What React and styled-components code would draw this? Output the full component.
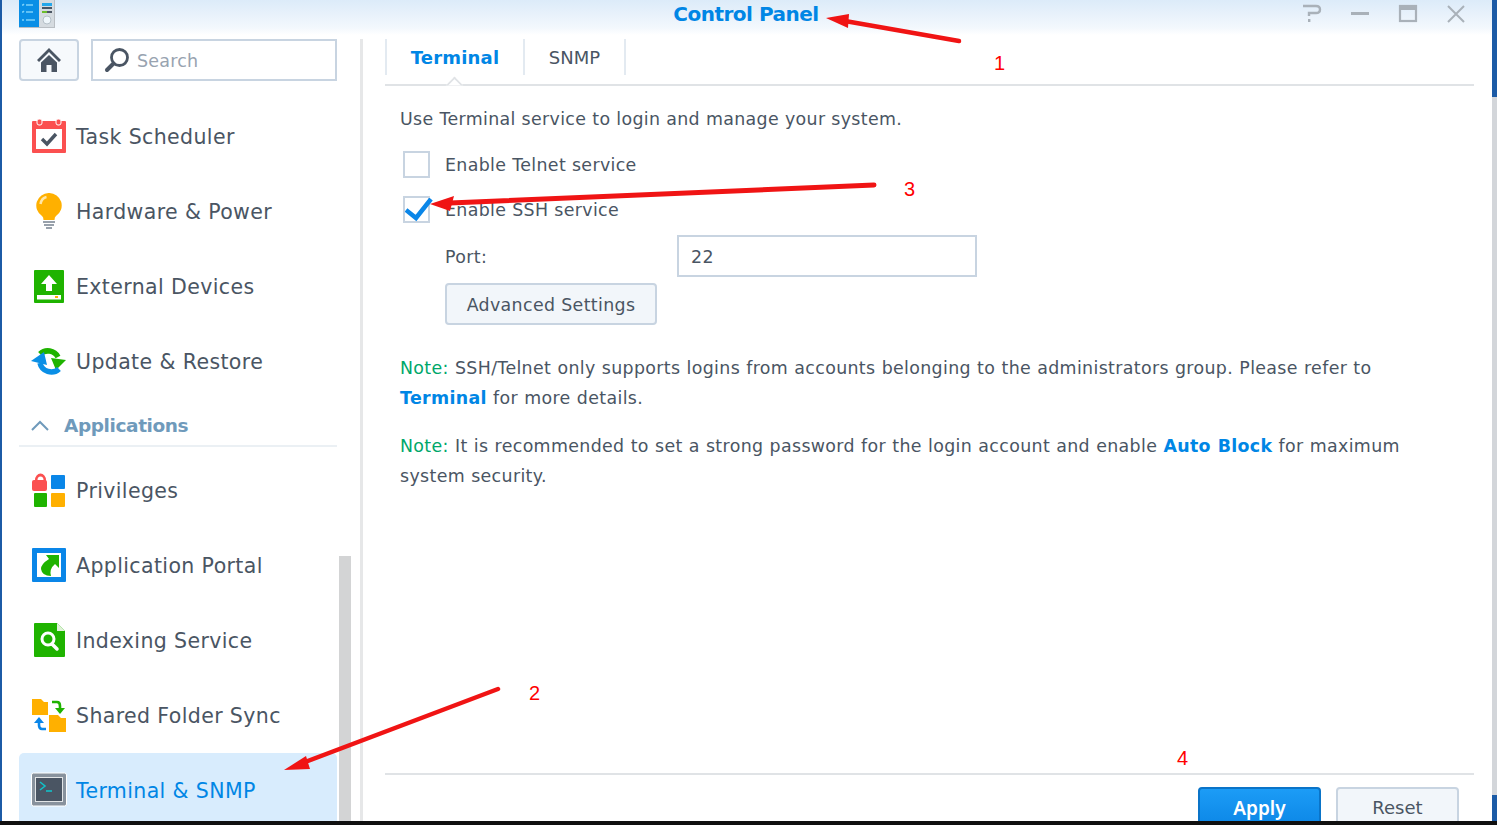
import React from "react";
import styled, { createGlobalStyle } from "styled-components";

const Global = createGlobalStyle`
  html, body { margin: 0; padding: 0; background: #000; }
  body { font-family: "DejaVu Sans", sans-serif; color: #4a5563; }
  * { box-sizing: border-box; }
`;

const Page = styled.div`
  position: relative;
  width: 1497px;
  height: 825px;
  overflow: hidden;
  display: flex;
  flex-direction: column;
`;
const Desktop = styled.div`
  flex: none;
  height: 821px;
  display: flex;
  background: #1c5ba6;
  padding-left: 2px;
`;
const BlackBar = styled.div`
  flex: none;
  height: 4px;
  background: #101010;
`;
const Win = styled.div`
  width: 1490px;
  height: 821px;
  background: #fff;
  display: flex;
  flex-direction: column;
  overflow: hidden;
`;
const RightEdge = styled.div`
  width: 5px;
  display: flex;
  flex-direction: column;
`;
const EdgePart = styled.div`
  height: ${(p) => p.$h}px;
  flex: ${(p) => (p.$h ? "none" : 1)};
  background: ${(p) => p.$c};
`;
const TitleBar = styled.header`
  flex: none;
  height: 39px;
  background: linear-gradient(#dcebf9 0, #f3f8fd 28px, #fff 35px);
  display: grid;
  grid-template-columns: 1fr auto 1fr;
`;
const GlyphSlot = styled.div`
  padding-left: 17px;
`;
const TitleText = styled.h1`
  margin: 3px 2px 0 0;
  font-size: 20px;
  line-height: 22px;
  font-weight: 700;
  letter-spacing: -0.5px;
  color: #0086e5;
`;
const WinControls = styled.div`
  display: flex;
  justify-content: flex-end;
  align-items: flex-start;
  padding: 3px 26px 0 0;
  gap: 28px;
`;
const Body = styled.div`
  flex: 1;
  min-height: 0;
  display: flex;
`;
const Sidebar = styled.aside`
  flex: none;
  width: 361px;
  padding-left: 17px;
  display: flex;
  border-right: 3px solid #e6e7e8;
`;
const SideList = styled.div`
  width: 318px;
  flex: none;
  display: flex;
  flex-direction: column;
`;
const ScrollTrack = styled.div`
  width: 12px;
  margin-left: 2px;
  flex: none;
  display: flex;
  flex-direction: column;
  justify-content: flex-end;
`;
const ScrollThumb = styled.div`
  height: 265px;
  background: #d3d4d5;
`;
const SearchRow = styled.div`
  display: flex;
  gap: 12px;
  height: 42px;
  flex: none;
  margin-bottom: 17.5px;
`;
const HomeButton = styled.button`
  width: 60px;
  height: 42px;
  padding: 0;
  display: flex;
  align-items: center;
  justify-content: center;
  background: #f6f9fc;
  border: 2px solid #c8d4e1;
  border-radius: 4px;
`;
const SearchBox = styled.div`
  flex: 1;
  display: flex;
  align-items: center;
  gap: 7px;
  padding-left: 11px;
  border: 2px solid #c8d4e1;
  font-size: 17.5px;
  letter-spacing: 0.2px;
  line-height: 24px;
  color: #98a3b0;
`;
const SearchLabel = styled.span`
  padding-top: 2px;
`;
const NavItem = styled.div`
  flex: none;
  height: 75px;
  display: flex;
  align-items: center;
  gap: 9px;
  padding-left: 12px;
  font-size: 20.5px;
  letter-spacing: 0.38px;
  color: ${(p) => (p.$active ? "#0086e5" : "#4a5563")};
  background: ${(p) => (p.$active ? "#d8ecfd" : "transparent")};
  border-radius: ${(p) => (p.$active ? "5px 5px 0 0" : "0")};
`;
const NavLabel = styled.span`
  padding-top: 2px;
`;
const IconBox = styled.span`
  width: 36px;
  height: 36px;
  flex: none;
  display: flex;
`;
const SectionHead = styled.div`
  flex: none;
  height: 48px;
  padding: 7px 0 0 11px;
  margin-bottom: 6px;
  display: flex;
  align-items: center;
  gap: 14px;
  font-size: 18.5px;
  font-weight: 700;
  letter-spacing: -0.4px;
  color: #6f9abb;
  border-bottom: 2px solid #ebf0f4;
`;
const Main = styled.main`
  flex: 1;
  min-width: 0;
  padding: 0 18px 0 22px;
  display: flex;
  flex-direction: column;
`;
const Tabs = styled.nav`
  position: relative;
  flex: none;
  height: 47px;
  display: flex;
  border-bottom: 2px solid #e0e3e6;
`;
const Tab = styled.div`
  height: 36px;
  width: ${(p) => p.$w}px;
  display: flex;
  align-items: center;
  justify-content: center;
  border-left: ${(p) => (p.$first ? "2px solid #e3eaf1" : "0")};
  border-right: 2px solid #e3eaf1;
  font-size: 18px;
  font-weight: ${(p) => (p.$active ? 700 : 400)};
  letter-spacing: ${(p) => (p.$active ? "0.2px" : "0")};
  color: ${(p) => (p.$active ? "#0086e5" : "#4a5563")};
`;
const TabNotch = styled.span`
  position: absolute;
  left: 62.5px;
  bottom: -7.5px;
  width: 13px;
  height: 13px;
  background: #fff;
  border-top: 2px solid #e0e3e6;
  border-left: 2px solid #e0e3e6;
  transform: rotate(45deg);
  clip-path: polygon(0 0, 100% 0, 0 100%);
`;
const Content = styled.section`
  flex: 1;
  min-height: 0;
  padding: 19px 0 0 15px;
  font-size: 17.4px;
  letter-spacing: 0.35px;
  display: flex;
  flex-direction: column;
`;
const Intro = styled.p`
  margin: 0 0 18px;
  line-height: 28px;
`;
const CheckRow = styled.label`
  display: flex;
  align-items: center;
  height: 27px;
  margin: 0 0 18px 3px;
  gap: 15px;
  line-height: 27px;
`;
const CheckLabel = styled.span`
  padding-top: 1px;
`;
const CheckBox = styled.span`
  position: relative;
  display: block;
  width: 27px;
  height: 27px;
  border: 2px solid #c8d4e1;
  background: #fff;
`;
const Check = styled.svg`
  position: absolute;
  left: 0;
  top: 0;
`;
const PortRow = styled.div`
  display: flex;
  align-items: center;
  margin: -6px 0 6px 45px;
  height: 42px;
`;
const PortLabel = styled.span`
  width: 232px;
  padding-top: 2px;
`;
const PortInput = styled.div`
  width: 300px;
  height: 42px;
  padding: 2px 0 0 12px;
  display: flex;
  align-items: center;
  border: 2px solid #c8d4e1;
`;
const PlainButton = styled.button`
  font: inherit;
  letter-spacing: inherit;
  color: #4a5563;
  width: 212px;
  height: 42px;
  margin-left: 45px;
  padding: 2px 0 0;
  background: #f2f6fa;
  border: 2px solid #c8d4e1;
  border-radius: 4px;
`;
const Note = styled.p`
  margin: ${(p) => p.$top}px 0 0;
  width: 1010px;
  line-height: 30px;
  word-spacing: 0.3px;
`;
const NoteLabel = styled.span`
  color: #00a76a;
`;
const InlineLink = styled.span`
  color: #0086e5;
  font-weight: 700;
`;
const Footer = styled.footer`
  flex: none;
  height: 48px;
  border-top: 2px solid #e0e3e6;
  padding: 12px 15px 0 0;
  display: flex;
  justify-content: flex-end;
  gap: 15px;
`;
const FootButton = styled.button`
  width: 123px;
  height: 46px;
  padding: 0 0 5px;
  font-size: ${(p) => (p.$primary ? 19 : 18)}px;
  font-family: ${(p) => (p.$primary ? '"Noto Sans"' : '"DejaVu Sans"')}, sans-serif;
  font-weight: ${(p) => (p.$primary ? 600 : 400)};
  color: ${(p) => (p.$primary ? "#fff" : "#4a5563")};
  background: ${(p) => (p.$primary ? "linear-gradient(#1c9cf6,#0a84e4)" : "#f2f6fa")};
  border: 2px solid ${(p) => (p.$primary ? "#0a74c8" : "#c8d4e1")};
  border-radius: 4px;
`;
const Overlay = styled.svg`
  position: absolute;
  left: 0;
  top: 0;
  pointer-events: none;
`;
const Mark = styled.span`
  position: absolute;
  left: ${(p) => p.$x}px;
  top: ${(p) => p.$y}px;
  font: 20px/24px "Liberation Sans", sans-serif;
  color: #f00;
`;

const AppGlyph = () => (
  <svg width="36" height="28" viewBox="0 0 36 28" style={{ display: "block" }}>
    <rect width="36" height="28" fill="#b9bec3" />
    <rect width="20" height="27" fill="#0a8fe6" />
    <rect x="20" width="15" height="27" fill="#d5dbe0" />
    <path d="M3 5h1l1-1M7 5h7M3 12h1l1-1M7 12h7M3 20h2M7 20h9" stroke="#7dd2fa" strokeWidth="1.4" fill="none" />
    <rect x="23" y="3" width="10" height="3" fill="#25a7ea" />
    <rect x="23" y="7" width="10" height="2" fill="#4a5563" />
    <rect x="23" y="11" width="5" height="2" fill="#6bbd2b" />
    <rect x="28" y="11" width="5" height="2" fill="#4a5563" />
    <circle cx="28" cy="20" r="4" fill="#eef6fb" stroke="#b5c0c8" />
  </svg>
);
const Help = () => (
  <svg width="20" height="20" viewBox="0 0 20 20" fill="none" stroke="#a9b1b9" strokeWidth="2.4">
    <path d="M1 3h13q4 0 4 3.5t-4 3.5H7v3" />
    <rect x="6" y="16" width="2.4" height="3" fill="#a9b1b9" stroke="none" />
  </svg>
);
const Minimize = () => (
  <svg width="20" height="20" viewBox="0 0 20 20"><rect x="1" y="9" width="18" height="3" fill="#a9b1b9" /></svg>
);
const Maximize = () => (
  <svg width="20" height="20" viewBox="0 0 20 20" fill="none">
    <rect x="2" y="3" width="16" height="15" stroke="#a9b1b9" strokeWidth="2.2" />
    <rect x="1" y="2" width="18" height="5" fill="#a9b1b9" />
  </svg>
);
const Close = () => (
  <svg width="20" height="20" viewBox="0 0 20 20" stroke="#a9b1b9" strokeWidth="2"><path d="M2 3l16 16M18 3L2 19" /></svg>
);
const Home = () => (
  <svg width="26" height="26" viewBox="0 0 26 26" fill="#4a5563">
    <path d="M13 1L1 13l2 2L13 5l10 10 2-2z" />
    <path d="M5 15.5L13 8l8 7.5V25h-5.5v-7h-5v7H5z" />
  </svg>
);
const SearchGlyph = () => (
  <svg width="26" height="26" viewBox="0 0 26 26" fill="none" stroke="#4a5563">
    <circle cx="15.5" cy="10.5" r="8" strokeWidth="2.8" />
    <path d="M9.5 16.5L3 23" strokeWidth="4" strokeLinecap="round" />
  </svg>
);
const Chevron = () => (
  <svg width="20" height="12" viewBox="0 0 20 12" fill="none" stroke="#6f9abb" strokeWidth="2"><path d="M2 11l8-8 8 8" /></svg>
);
const Svg = ({ children }) => (
  <svg width="36" height="36" viewBox="0 0 36 36">{children}</svg>
);
const TaskIcon = () => (
  <Svg>
    <rect x="1" y="3" width="34" height="32" rx="1" fill="#fb5050" />
    <rect x="6" y="1" width="5" height="6" rx="2" fill="#fb5050" stroke="#fff" />
    <rect x="25" y="1" width="5" height="6" rx="2" fill="#fb5050" stroke="#fff" />
    <rect x="5" y="11" width="26" height="20" fill="#fff" />
    <path d="M11 21l5 5 9-10" fill="none" stroke="#4a5563" strokeWidth="3.4" />
  </Svg>
);
const BulbIcon = () => (
  <Svg>
    <path d="M18 0a12.5 12.5 0 0 1 7 23q-1.500 1-1.500 4h-11q0-3-1.500-4a12.500 12.500 0 0 1 7-23z" fill="#ffb000" />
    <path d="M9.500 11q1-6 6-7" fill="none" stroke="#ffe6a8" strokeWidth="2.500" />
    <path d="M12 29h12M13 32h10M15 35h6" stroke="#98a1ab" strokeWidth="1.800" />
  </Svg>
);
const ExternalIcon = () => (
  <Svg>
    <rect x="3" y="2" width="30" height="33" rx="1" fill="#1fb300" />
    <path d="M18 7l8 9h-5v7h-6v-7h-5z" fill="#fff" />
    <rect x="6" y="27" width="24" height="4.500" fill="#fff" />
    <rect x="24" y="28" width="3" height="2" fill="#ffb000" />
  </Svg>
);
const UpdateIcon = () => (
  <Svg>
    <path d="M9 11A11.500 11.500 0 0 1 27 14" fill="none" stroke="#1fb300" strokeWidth="5.500" />
    <path d="M20 15L35 17L25 27z" fill="#1fb300" />
    <path d="M9 20A11.500 11.500 0 0 0 28 26" fill="none" stroke="#0a8fe6" strokeWidth="5.500" />
    <path d="M0 18L13 9L16 22z" fill="#0a8fe6" />
  </Svg>
);
const PrivIcon = () => (
  <Svg>
    <path d="M4 8a5.500 6.500 0 0 1 11 0v1h-2.500V8a3 3.500 0 0 0-6 0v1H4z" fill="#fb5050" />
    <rect x="1" y="8" width="15" height="11" rx="2" fill="#fb5050" />
    <rect x="20" y="3" width="14" height="14" rx="1" fill="#0a86e8" />
    <rect x="3" y="21" width="13" height="14" rx="1" fill="#1fb300" />
    <rect x="20" y="21" width="14" height="14" rx="1" fill="#ffb000" />
  </Svg>
);
const PortalIcon = () => (
  <Svg>
    <rect x="1" y="1" width="34" height="34" rx="1" fill="#0a86e8" />
    <rect x="6" y="6" width="24" height="24" fill="#fff" />
    <path d="M15 8H28V21L24 17Q18 22 20 29Q11 29 10 22Q10 17 18 12z" fill="#1fb300" />
  </Svg>
);
const IndexIcon = () => (
  <Svg>
    <path d="M4 1h22l8 8v25a1 1 0 0 1-1 1H4a1 1 0 0 1-1-1V2a1 1 0 0 1 1-1z" fill="#1fb300" />
    <path d="M26 1l8 8h-8z" fill="#dff2d8" />
    <circle cx="17" cy="17" r="6" fill="none" stroke="#fff" strokeWidth="3" />
    <path d="M21 22l5 5" stroke="#fff" strokeWidth="3.500" strokeLinecap="round" />
  </Svg>
);
const SyncIcon = () => (
  <Svg>
    <path d="M1 2h9l3 3h4v13H1z" fill="#ffb000" />
    <path d="M18 18h9l3 3h5v14H18z" fill="#ffb000" />
    <path d="M21 5h5q3 0 3 4v4" fill="none" stroke="#1fb300" strokeWidth="2.600" />
    <path d="M24 11h10l-5 6z" fill="#1fb300" />
    <path d="M15 32h-4q-3 0-3-4v-3" fill="none" stroke="#0a86e8" strokeWidth="2.600" />
    <path d="M3 26l5-6 5 6z" fill="#0a86e8" />
  </Svg>
);
const TermIcon = () => (
  <Svg>
    <rect x="0.500" y="1" width="35" height="33" rx="2" fill="#88929d" stroke="#fff" />
    <rect x="4" y="5" width="28" height="25" fill="#fff" opacity=".75" />
    <rect x="5" y="6" width="26" height="23" fill="#4a5563" />
    <path d="M9 10l5 4-5 4" fill="none" stroke="#12c0c8" strokeWidth="1.600" />
    <path d="M15 19h6" stroke="#12c0c8" strokeWidth="1.600" />
  </Svg>
);

const firstGroup = [
  ["Task Scheduler", TaskIcon],
  ["Hardware & Power", BulbIcon],
  ["External Devices", ExternalIcon],
  ["Update & Restore", UpdateIcon],
];
const secondGroup = [
  ["Privileges", PrivIcon],
  ["Application Portal", PortalIcon],
  ["Indexing Service", IndexIcon],
  ["Shared Folder Sync", SyncIcon],
  ["Terminal & SNMP", TermIcon, true],
];

const Item = ({ row }) => {
  const [label, Icon, active] = row;
  return (
    <NavItem $active={active}>
      <IconBox><Icon /></IconBox>
      <NavLabel>{label}</NavLabel>
    </NavItem>
  );
};

export default function App() {
  return (
    <Page>
      <Global />
      <Desktop>
        <Win>
          <TitleBar>
            <GlyphSlot><AppGlyph /></GlyphSlot>
            <TitleText>Control Panel</TitleText>
            <WinControls>
              <Help /><Minimize /><Maximize /><Close />
            </WinControls>
          </TitleBar>
          <Body>
            <Sidebar>
              <SideList>
                <SearchRow>
                  <HomeButton><Home /></HomeButton>
                  <SearchBox><SearchGlyph /><SearchLabel>Search</SearchLabel></SearchBox>
                </SearchRow>
                {firstGroup.map((r) => <Item key={r[0]} row={r} />)}
                <SectionHead><Chevron />Applications</SectionHead>
                {secondGroup.map((r) => <Item key={r[0]} row={r} />)}
              </SideList>
              <ScrollTrack><ScrollThumb /></ScrollTrack>
            </Sidebar>
            <Main>
              <Tabs>
                <Tab $first $active $w={140}>Terminal</Tab>
                <Tab $w={101}>SNMP</Tab>
                <TabNotch />
              </Tabs>
              <Content>
                <Intro>Use Terminal service to login and manage your system.</Intro>
                <CheckRow><CheckBox /><CheckLabel>Enable Telnet service</CheckLabel></CheckRow>
                <CheckRow>
                  <CheckBox>
                    <Check width="28" height="24" viewBox="0 0 28 24" fill="none">
                      <path d="M1 12l10 8L26 1" stroke="#0a86e8" strokeWidth="4.500" />
                    </Check>
                  </CheckBox>
                  <CheckLabel>Enable SSH service</CheckLabel>
                </CheckRow>
                <PortRow>
                  <PortLabel>Port:</PortLabel>
                  <PortInput>22</PortInput>
                </PortRow>
                <div><PlainButton>Advanced Settings</PlainButton></div>
                <Note $top={28}>
                  <NoteLabel>Note:</NoteLabel> SSH/Telnet only supports logins from accounts belonging to the administrators group. Please refer to <InlineLink>Terminal</InlineLink> for more details.
                </Note>
                <Note $top={18}>
                  <NoteLabel>Note:</NoteLabel> It is recommended to set a strong password for the login account and enable <InlineLink>Auto Block</InlineLink> for maximum system security.
                </Note>
              </Content>
              <Footer>
                <FootButton $primary>Apply</FootButton>
                <FootButton>Reset</FootButton>
              </Footer>
            </Main>
          </Body>
        </Win>
        <RightEdge>
          <EdgePart $h={97} $c="#1c5ba6" />
          <EdgePart $h={698} $c="#d3d6da" />
          <EdgePart $c="#1c5ba6" />
        </RightEdge>
      </Desktop>
      <BlackBar />
      <Overlay width="1497" height="825" viewBox="0 0 1497 825">
        <g fill="#f01414" stroke="#f01414" strokeLinecap="round">
          <path d="M959 41L845 21" strokeWidth="4.500" fill="none" />
          <path d="M826 18L849 14L848 28z" stroke="none" />
          <path d="M874 185L450 203" strokeWidth="5" fill="none" />
          <path d="M430 204L454 196L450 211z" stroke="none" />
          <path d="M498 689L305 762" strokeWidth="4.500" fill="none" />
          <path d="M284 770L306 756L310 769z" stroke="none" />
        </g>
      </Overlay>
      <Mark $x={994} $y={51}>1</Mark>
      <Mark $x={529} $y={681}>2</Mark>
      <Mark $x={904} $y={177}>3</Mark>
      <Mark $x={1177} $y={746}>4</Mark>
    </Page>
  );
}
